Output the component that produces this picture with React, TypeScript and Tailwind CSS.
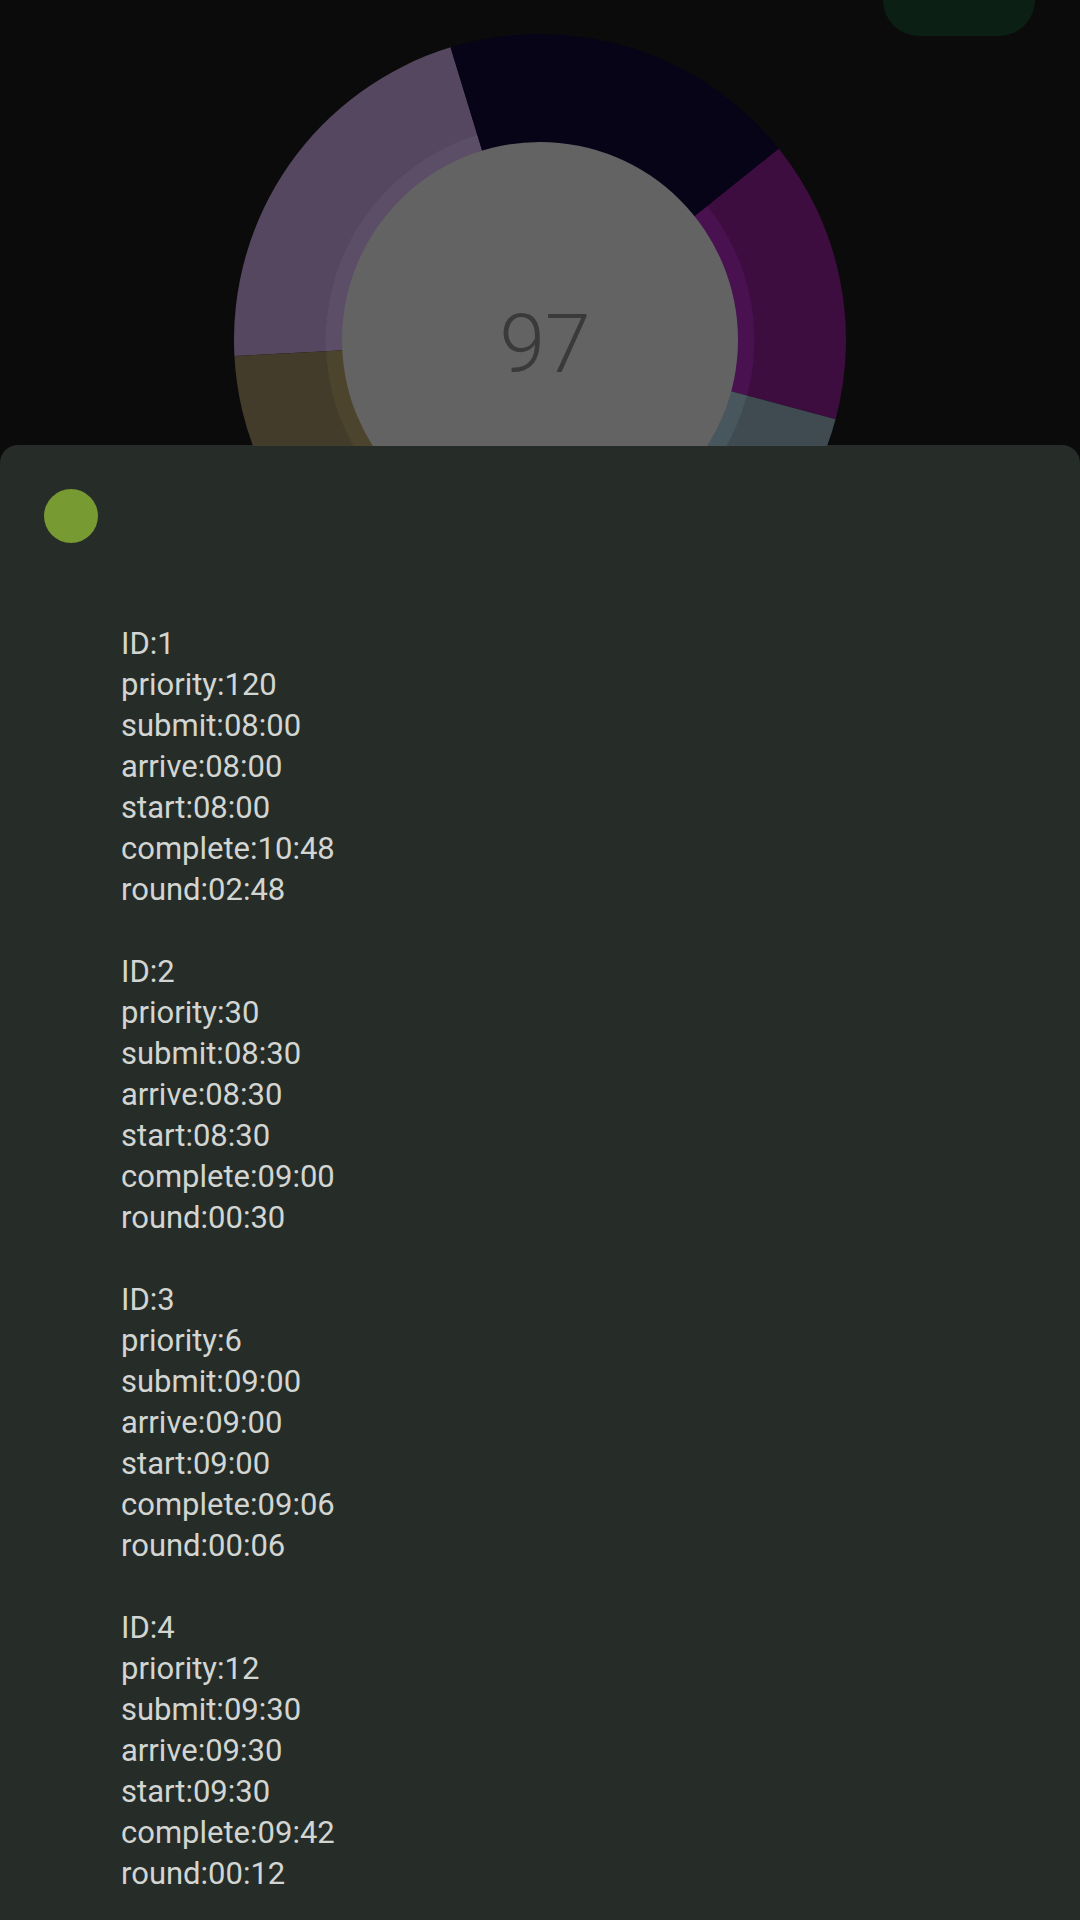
import React from 'react';

const CX = 540;
const CY = 340;

interface Segment {
  from: number;
  to: number;
  color: string;
  band: string;
}

const segments: Segment[] = [
  { from: -93, to: -17, color: '#54475f', band: '#5d4e68' },
  { from: -17, to: 51.3, color: '#070418', band: '#070418' },
  { from: 51.3, to: 105, color: '#3d0d40', band: '#4a1150' },
  { from: 105, to: 185, color: '#404b51', band: '#48565d' },
  { from: 185, to: 267, color: '#443c2a', band: '#4d442d' },
];

const tasks = [
  { id: 1, priority: 120, submit: '08:00', arrive: '08:00', start: '08:00', complete: '10:48', round: '02:48' },
  { id: 2, priority: 30, submit: '08:30', arrive: '08:30', start: '08:30', complete: '09:00', round: '00:30' },
  { id: 3, priority: 6, submit: '09:00', arrive: '09:00', start: '09:00', complete: '09:06', round: '00:06' },
  { id: 4, priority: 12, submit: '09:30', arrive: '09:30', start: '09:30', complete: '09:42', round: '00:12' },
];

// angle in degrees, clockwise from top
const pt = (r: number, deg: number) => {
  const a = (deg * Math.PI) / 180;
  return [CX + r * Math.sin(a), CY - r * Math.cos(a)];
};

const arc = (r1: number, r2: number, from: number, to: number) => {
  const [x1, y1] = pt(r2, from);
  const [x2, y2] = pt(r2, to);
  const [x3, y3] = pt(r1, to);
  const [x4, y4] = pt(r1, from);
  const large = to - from > 180 ? 1 : 0;
  return `M${x1} ${y1} A${r2} ${r2} 0 ${large} 1 ${x2} ${y2} L${x3} ${y3} A${r1} ${r1} 0 ${large} 0 ${x4} ${y4} Z`;
};

function Donut() {
  return (
    <svg width="1080" height="660" viewBox="0 0 1080 660" className="block">
      {segments.map((s, i) => (
        <path key={`o${i}`} d={arc(214, 306, s.from, s.to)} fill={s.color} />
      ))}
      {segments.map((s, i) => (
        <path key={`b${i}`} d={arc(197, 214.5, s.from, s.to)} fill={s.band} />
      ))}
      <circle cx={CX} cy={CY} r={198} fill="#636363" />
      <text
        x={CX + 5}
        y={CY + 32}
        textAnchor="middle"
        fontSize="82"
        fontWeight="300"
        fill="#3a3a3a"
        style={{ fontFamily: 'Roboto, "Liberation Sans", sans-serif' }}
      >
        97
      </text>
    </svg>
  );
}

export default function App() {
  return (
    <div className="w-[1080px] h-[1920px] bg-[#0b0b0b] overflow-hidden flex flex-col font-['Roboto','Liberation_Sans',sans-serif]">
      {/* dimmed background with chart */}
      <div className="relative h-[446px] shrink-0 overflow-hidden">
        <div className="absolute left-[883px] top-[-40px] w-[152px] h-[76px] rounded-[36px] bg-[#0c1f14]" />
        <Donut />
      </div>

      {/* bottom sheet */}
      <div className="flex-1 bg-[#262d28] rounded-t-[18px] -mt-px">
        <div className="pl-[44px] pt-[44px]">
          <div className="w-[54px] h-[54px] rounded-full bg-[#779a32]" />
        </div>
        <div className="pl-[121px] pt-[80px] text-[31px] leading-[41px] text-[#d2d5d2]">
          {tasks.map((t, i) => (
            <div key={t.id} className={i > 0 ? 'mt-[41px]' : ''}>
              <div>ID:{t.id}</div>
              <div>priority:{t.priority}</div>
              <div>submit:{t.submit}</div>
              <div>arrive:{t.arrive}</div>
              <div>start:{t.start}</div>
              <div>complete:{t.complete}</div>
              <div>round:{t.round}</div>
            </div>
          ))}
        </div>
      </div>
    </div>
  );
}
